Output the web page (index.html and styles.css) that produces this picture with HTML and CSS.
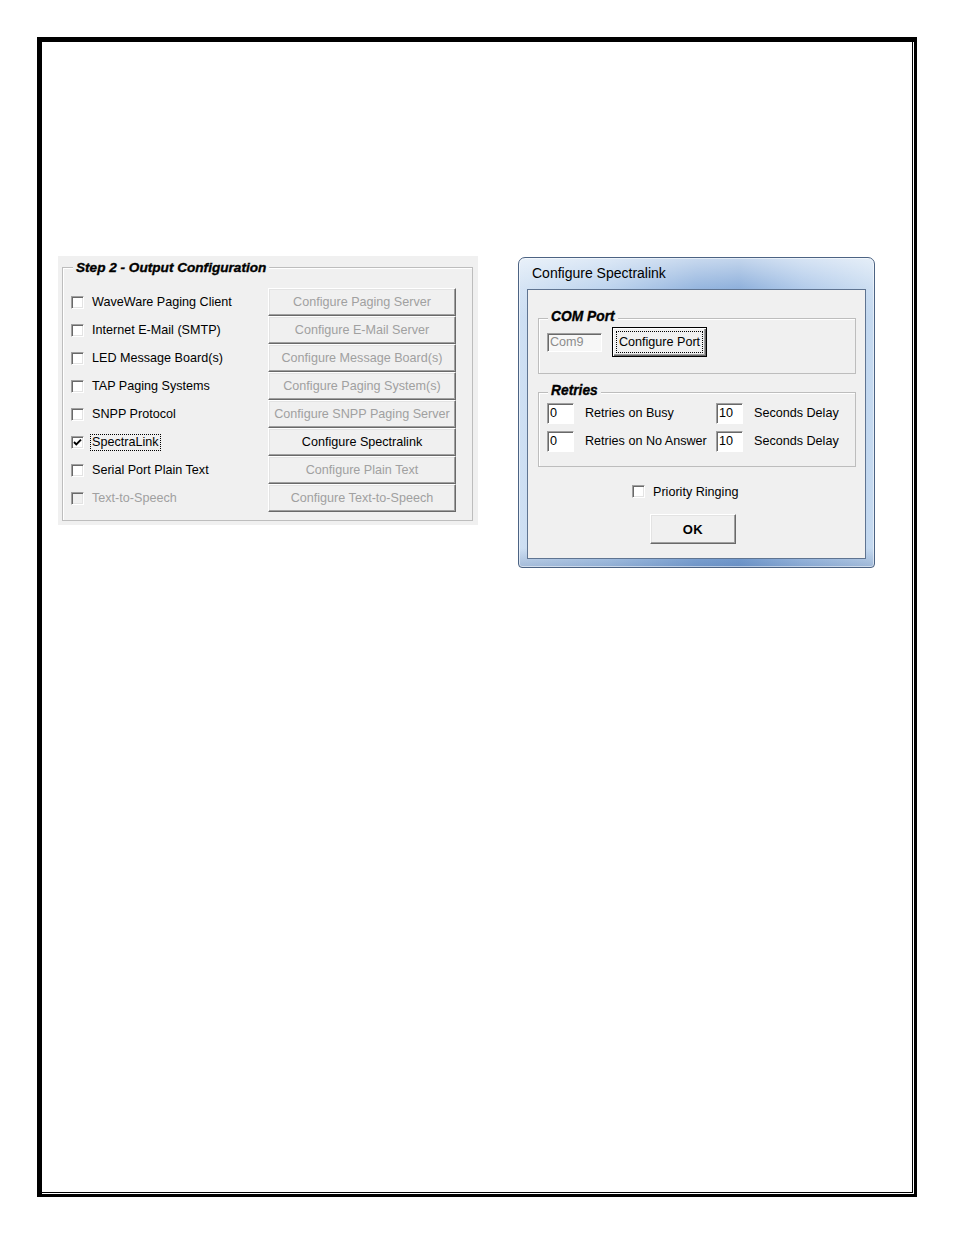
FILE: index.html
```html
<!DOCTYPE html>
<html>
<head>
<meta charset="utf-8">
<link rel="stylesheet" href="styles.css">
</head>
<body>
<div class="page">
  <div class="page-inner">
    <div class="row">
      <div class="panel">
        <div class="group">
          <div class="legend">Step 2 - Output Configuration</div>
          <div class="grid">
            <div class="opt"><span class="cb"></span><span class="lbl">WaveWare Paging Client</span></div>
            <div class="btn off">Configure Paging Server</div>
            <div class="opt"><span class="cb"></span><span class="lbl">Internet E-Mail (SMTP)</span></div>
            <div class="btn off">Configure E-Mail Server</div>
            <div class="opt"><span class="cb"></span><span class="lbl">LED Message Board(s)</span></div>
            <div class="btn off">Configure Message Board(s)</div>
            <div class="opt"><span class="cb"></span><span class="lbl">TAP Paging Systems</span></div>
            <div class="btn off">Configure Paging System(s)</div>
            <div class="opt"><span class="cb"></span><span class="lbl">SNPP Protocol</span></div>
            <div class="btn off">Configure SNPP Paging Server</div>
            <div class="opt"><span class="cb"><svg class="tick" width="11" height="11" viewBox="0 0 11 11"><path d="M2 5 L4.3 7.4 L9 2.6" fill="none" stroke="#000" stroke-width="1.9"/></svg></span><span class="lbl focus">SpectraLink</span></div>
            <div class="btn">Configure Spectralink</div>
            <div class="opt"><span class="cb"></span><span class="lbl">Serial Port Plain Text</span></div>
            <div class="btn off">Configure Plain Text</div>
            <div class="opt dis"><span class="cb"></span><span class="lbl">Text-to-Speech</span></div>
            <div class="btn off">Configure Text-to-Speech</div>
          </div>
        </div>
      </div>

      <div class="dialog">
        <div class="titlebar">Configure Spectralink</div>
        <div class="client">
          <div class="group dgroup com">
            <div class="legend">COM Port</div>
            <div class="com-row">
              <div class="field ro">Com9</div>
              <div class="btn dbtn default"><span class="focusbox">Configure Port</span></div>
            </div>
          </div>
          <div class="group dgroup retries">
            <div class="legend">Retries</div>
            <div class="rgrid">
              <div class="field">0</div>
              <div class="rlbl">Retries on Busy</div>
              <div class="field">10</div>
              <div class="rlbl">Seconds Delay</div>
              <div class="field">0</div>
              <div class="rlbl">Retries on No Answer</div>
              <div class="field">10</div>
              <div class="rlbl">Seconds Delay</div>
            </div>
          </div>
          <div class="prio"><span class="cb"></span><span class="lbl">Priority Ringing</span></div>
          <div class="btn dbtn ok">OK</div>
        </div>
      </div>
    </div>
  </div>
</div>
</body>
</html>
```

FILE: styles.css
```css
* { box-sizing: border-box; }
html, body { margin: 0; padding: 0; background: #fff; }
body { font-family: "Liberation Sans", Arial, sans-serif; color: #000; }

.page {
  margin: 37px 0 0 37px;
  width: 880px;
  height: 1160px;
  border-style: solid;
  border-color: #000;
  border-width: 5px 3px 3px 5px;
}
.page-inner {
  height: calc(100% - 1px);
  margin-right: 1px;
  border-right: 1px solid #000;
  border-bottom: 1px solid #000;
}

.row {
  display: flex;
  align-items: flex-start;
  gap: 40px;
  padding: 214px 0 0 16px;
}

/* ---------- left panel ---------- */
.panel {
  width: 420px;
  height: 269px;
  background: #f0f0f0;
  padding: 11px 5px 0 4px;
}
.group {
  border: 1px solid #bdbdbd;
  box-shadow: inset 1px 1px 0 #fff;
}
.panel .group { padding: 0 16px 8px 8px; }
.legend {
  display: block;
  width: max-content;
  height: 16px;
  line-height: 16px;
  margin: -8px 0 0 2px;
  padding: 0 3px;
  background: #f0f0f0;
  font-weight: bold;
  font-style: italic;
  font-size: 13.6px;
  -webkit-text-stroke: 0.35px #000;
  color: #000;
}
.grid {
  margin-top: 12px;
  display: grid;
  grid-template-columns: 197px 188px;
  grid-auto-rows: 28px;
}
.opt {
  display: flex;
  align-items: center;
  font-size: 12.6px;
}
.cb {
  flex: none;
  position: relative;
  width: 13px;
  height: 13px;
  background: #fff;
  border: 1px solid;
  border-color: #a0a0a0 #fff #fff #a0a0a0;
  box-shadow: inset 1px 1px 0 #696969, inset -1px -1px 0 #e3e3e3;
}
.tick { position: absolute; left: 0; top: 0; }
.opt .lbl { margin-left: 8px; }
.lbl.focus {
  margin-left: 6px;
  padding: 0 1px;
  border: 1px dotted #000;
  line-height: 15px;
}
.opt.dis { color: #a0a0a0; }
.opt.dis .cb { background: #f0f0f0; }

.btn {
  display: flex;
  align-items: center;
  justify-content: center;
  background: #f0f0f0;
  border: 1px solid;
  border-color: #fff #696969 #696969 #fff;
  box-shadow: inset -1px -1px 0 #a0a0a0, inset 1px 1px 0 #e3e3e3;
  font-size: 12.6px;
  color: #000;
}
.grid .btn { height: 28px; }
.btn.off { color: #a0a0a0; }

/* ---------- dialog ---------- */
.dialog {
  margin-top: 1px;
  width: 357px;
  height: 311px;
  border: 1px solid #4c6383;
  border-radius: 7px 7px 4px 4px;
  padding: 0 8px 8px 8px;
  background:
    linear-gradient(to bottom, rgba(255,255,255,0.55) 0, rgba(255,255,255,0.15) 30px, rgba(255,255,255,0) 60px, rgba(40,80,140,0) 290px, rgba(40,80,140,0.25) 100%),
    linear-gradient(to right, #cfe0f3 0%, #b3cdeb 25%, #86abda 50%, #7da4d6 62%, #a6c3e7 80%, #c6daf0 100%);
  box-shadow: inset 0 0 0 1px rgba(255,255,255,0.5);
}
.titlebar {
  height: 31px;
  line-height: 31px;
  padding-left: 5px;
  font-size: 14px;
  color: #000;
}
.client {
  height: 270px;
  background: #f0f0f0;
  border: 1px solid #5f7491;
  font-size: 12.6px;
}
.dgroup .legend {
  margin: -10px 0 0 1px;
  font-size: 13.8px;
}
.com { margin: 28px 9px 0 10px; padding: 0 0 16px 8px; }
.com-row {
  margin-top: 2px;
  display: flex;
  align-items: center;
  gap: 10px;
}
.field {
  width: 27px;
  height: 21px;
  line-height: 19px;
  padding-left: 2px;
  background: #fff;
  border: 1px solid;
  border-color: #a0a0a0 #fff #fff #a0a0a0;
  box-shadow: inset 1px 1px 0 #696969;
  font-size: 12.6px;
  color: #000;
}
.field.ro {
  width: 55px;
  height: 19px;
  line-height: 17px;
  background: #f7f7f7;
  color: #8c8c8c;
}
.dbtn { font-size: 12.6px; }
.default {
  width: 95px;
  height: 30px;
  border: 1px solid #000;
  box-shadow: inset 1px 1px 0 #fff, inset -1px -1px 0 #696969, inset -2px -2px 0 #a0a0a0;
}
.focusbox {
  display: block;
  width: 87px;
  height: 22px;
  line-height: 20px;
  text-align: center;
  border: 1px dotted #000;
}
.retries { margin: 18px 9px 0 10px; padding: 0 0 14px 8px; }
.rgrid {
  margin-top: 4px;
  display: grid;
  grid-template-columns: 27px 142px 27px 1fr;
  grid-auto-rows: 21px;
  row-gap: 7px;
  align-items: center;
}
.rlbl { padding-left: 11px; line-height: 16px; margin-top: -2px; }
.prio {
  margin: 18px 0 0 104px;
  display: flex;
  align-items: center;
  height: 13px;
}
.prio .lbl { margin-left: 8px; }
.ok {
  margin: 16px 0 0 122px;
  width: 86px;
  height: 30px;
  font-weight: bold;
  font-size: 13px;
  letter-spacing: 0.5px;
}
```
